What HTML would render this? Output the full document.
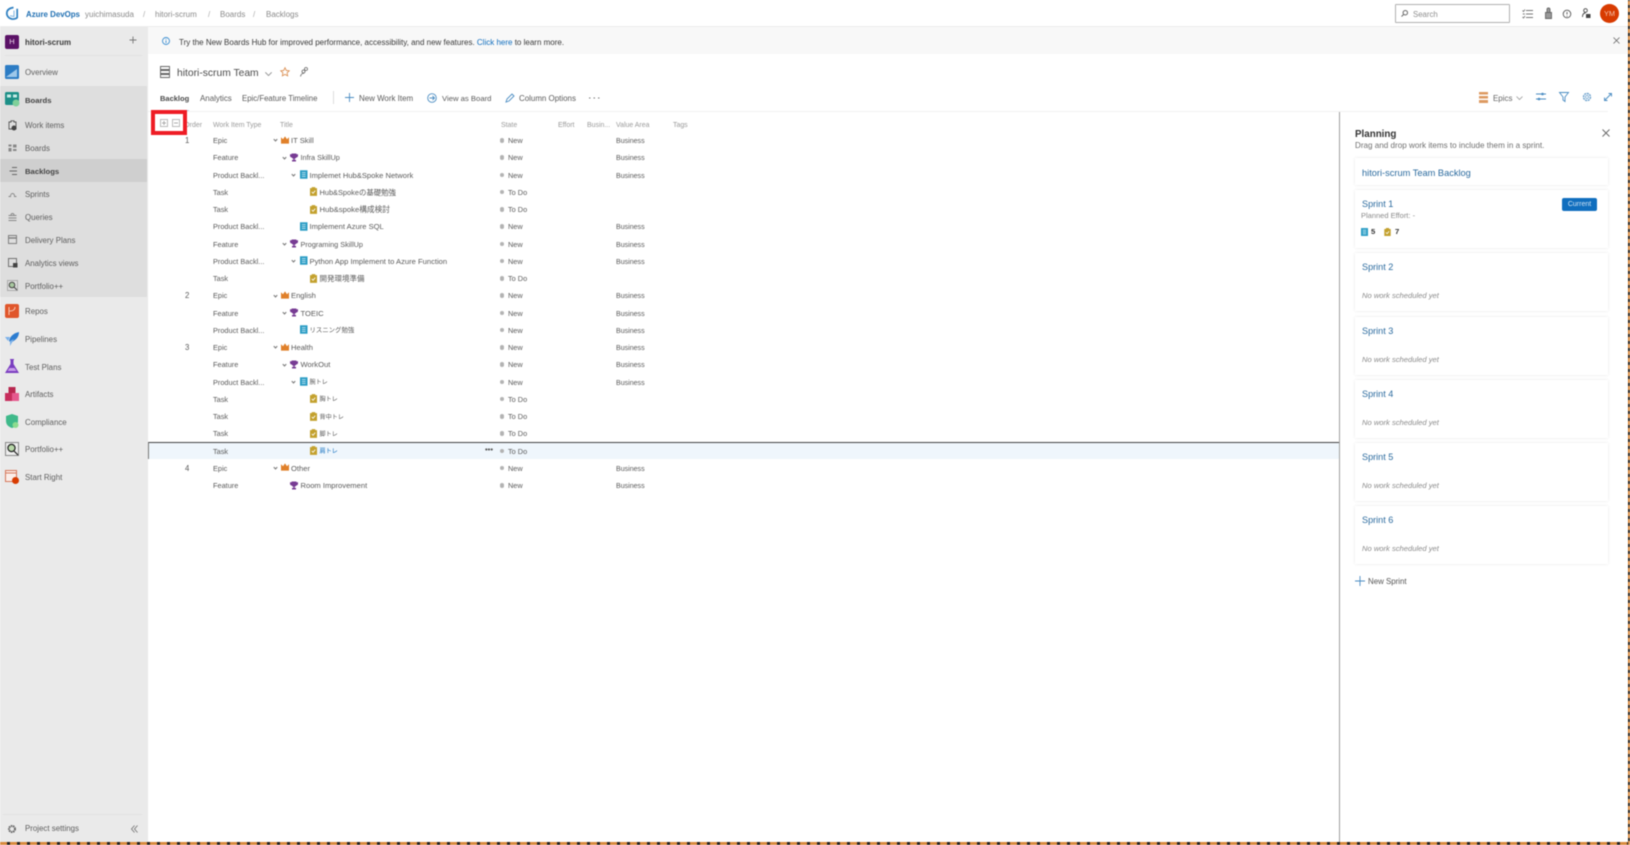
<!DOCTYPE html>
<html lang="en"><head><meta charset="utf-8"><title>Backlogs</title>
<style>
*{box-sizing:border-box}
html,body{margin:0;padding:0;width:1630px;height:845px;overflow:hidden;background:#fff}
body{font-family:"Liberation Sans","Noto Sans CJK JP",sans-serif;font-size:7.9px;color:#555;position:relative}
#wrap{position:absolute;inset:0;filter:blur(.4px)}
.a{position:absolute;white-space:nowrap;line-height:12px}
svg{position:absolute;overflow:visible}
.nav{position:absolute;left:25px;margin-top:1px;line-height:12px;white-space:nowrap;color:#5f5f5f;font-size:7.9px}
.r{position:absolute;left:148px;width:1191px;height:17px;font-size:7.6px}
.r span{position:absolute;top:3.5px;line-height:12px;white-space:nowrap;color:#5a5a5a}
.r svg{top:4px}
.r .o{left:37px;font-size:7.8px}
.r .t{left:65px;font-size:7.35px}
.r .s{left:360px;font-size:7.35px}
.r .v{left:468px;font-size:7.05px;top:4.5px}
.r i{position:absolute;left:351.500px;top:6.500px;width:4.500px;height:4.500px;border-radius:50%;background:#b3b3b3}
.r b{position:absolute;top:6.800px;width:3px;height:3px;border:solid #777;border-width:0 .8px .8px 0;transform:rotate(45deg)}
.l0{left:143px}.l1{left:152.500px}.l2{left:161.500px}.l3{left:171.500px}
.r svg.c{left:133px}.r svg.f{left:142px}.r svg.p{left:151.500px}.r svg.k{left:161.500px}
.ch{font-size:6.1px !important;top:4px !important}
.card{position:absolute;left:1355px;width:253px;background:#fff;box-shadow:0 0 3px rgba(0,0,0,.1)}
.st{position:absolute;left:7px;top:8px;font-size:9.100px;line-height:13px;color:#2a6a9e}
.nw{position:absolute;left:7px;top:37px;font-size:7.6px;line-height:12px;font-style:italic;color:#8a8a8a}
.h{position:absolute;top:120px;line-height:12px;color:#9a9a9a;font-size:6.95px;white-space:nowrap}
.tb{position:absolute;top:93px;line-height:12px;white-space:nowrap;color:#5a5a5a;font-size:7.95px}
</style></head><body>
<svg width="0" height="0" style="position:absolute"><defs>
<symbol id="crown" viewBox="0 0 10 9"><path d="M0 1l2.500 2.500L5 0l2.500 3.500L10 1v8H0z" fill="#e0802a"/></symbol>
<symbol id="trophy" viewBox="0 0 10 10"><path d="M2 0h6v1h2v2c0 1-1 2-2.200 2C7.300 6 6.500 6.400 5.800 6.500V8H7.500v2h-5V8h1.700V6.500C3.500 6.400 2.700 6 2.200 5 1 5 0 4 0 3V1h2z" fill="#773b93"/></symbol>
<symbol id="book" viewBox="0 0 8 9"><rect width="8" height="9" fill="#2a9cc4"/><path d="M2 2.500h4M2 4.500h4M2 6.500h4" stroke="#d5eef7" stroke-width=".8"/></symbol>
<symbol id="task" viewBox="0 0 8 10"><path d="M0 1.200h2V0h4v1.200h2V10H0z" fill="#c3a12e"/><path d="M2 5.500l1.500 1.500L6 4" stroke="#fff" stroke-width="1" fill="none"/></symbol>
</defs></svg>
<div id="wrap">
<!-- sidebar -->
<div style="position:absolute;left:0;top:27px;width:148px;height:815px;background:#eaeaea"></div>
<div style="position:absolute;left:0;top:86px;width:147px;height:211px;background:#dedede"></div>
<div style="position:absolute;left:0;top:159px;width:147px;height:23px;background:#cfcfcf"></div>
<div style="position:absolute;left:5px;top:55px;width:137px;height:1px;background:#e2e2e2"></div>
<div style="position:absolute;left:3px;top:814px;width:139px;height:1px;background:#e2e2e2"></div>

<!-- header -->
<svg style="left:5px;top:6px" width="14" height="15" viewBox="0 0 14 15"><path d="M8.500 1.500C5 2 2 3.500 1.800 7c-.1 3 2 5.500 5.200 6 2.300.3 4.700-.5 5.200-1.500V2.800" fill="none" stroke="#2d7fc1" stroke-width="1.700"/><path d="M9 4.500V10.500L5 9.800" fill="none" stroke="#7db5e0" stroke-width="1"/></svg>
<div class="a" style="left:26px;top:9px;color:#1f6fb2;font-weight:bold;font-size:7.900px">Azure DevOps</div>
<div class="a" style="left:85px;top:9px;color:#8a8a8a;font-size:8px">yuichimasuda</div>
<div class="a" style="left:143px;top:9px;color:#aaa">/</div>
<div class="a" style="left:155px;top:9px;color:#8a8a8a;font-size:8px">hitori-scrum</div>
<div class="a" style="left:208px;top:9px;color:#aaa">/</div>
<div class="a" style="left:220px;top:9px;color:#8a8a8a;font-size:8px">Boards</div>
<div class="a" style="left:253px;top:9px;color:#aaa">/</div>
<div class="a" style="left:266px;top:9px;color:#8a8a8a;font-size:8px">Backlogs</div>
<div style="position:absolute;left:1395px;top:4px;width:115px;height:19px;border:1px solid #b0b0b0;border-radius:1px;background:#fff"></div>
<svg style="left:1401px;top:10px" width="7" height="7" viewBox="0 0 7 7"><circle cx="4.300" cy="2.700" r="2.200" fill="none" stroke="#666"/><path d="M2.800 4.300L.5 6.500" stroke="#666"/></svg>
<div class="a" style="left:1413px;top:9px;color:#8e8e8e;font-size:7.800px">Search</div>
<svg style="left:1522px;top:9px" width="11" height="10" viewBox="0 0 11 10"><path d="M4 1.500h7M4 5h7M4 8.500h7M.5 1.500l1 1 1.500-2M.5 8l1 1 1.500-2M.8 5h2" stroke="#777" stroke-width=".9" fill="none"/></svg>
<svg style="left:1545px;top:8px" width="7" height="11" viewBox="0 0 7 11"><path d="M.5 4.500h6v6h-6zM2 4.500V1.500a1.500 1.500 0 0 1 3 0v3" fill="#999" stroke="#666" stroke-width=".9"/></svg>
<svg style="left:1562px;top:9px" width="10" height="10" viewBox="0 0 10 10"><circle cx="5" cy="5" r="3.800" fill="none" stroke="#555" stroke-width=".9"/><path d="M5 3v2.500M5 6.800v.8" stroke="#555" stroke-width=".9"/></svg>
<svg style="left:1582px;top:8px" width="9" height="11" viewBox="0 0 9 11"><circle cx="3.500" cy="2.500" r="1.800" fill="none" stroke="#444" stroke-width=".9"/><path d="M.5 9c0-3 1.500-4 3-4" stroke="#444" stroke-width=".9" fill="none"/><rect x="4" y="6" width="4.500" height="4" fill="#444"/></svg>
<div class="a" style="left:1600px;top:4px;width:19px;height:19px;border-radius:50%;background:#d83b01;color:#f4c4ad;font-size:7.400px;line-height:19px;text-align:center">YM</div>
<div style="position:absolute;left:0;top:26px;width:1628px;height:1px;background:#ececec"></div>

<!-- project -->
<div class="a" style="left:5px;top:35px;width:14px;height:14px;border-radius:2px;background:#5b1266;color:#ecd5ea;font-size:7.500px;line-height:14px;text-align:center">H</div>
<div class="nav" style="top:36px;color:#3c3c3c;font-weight:bold;font-size:7.900px">hitori-scrum</div>
<svg style="left:129px;top:36px" width="8" height="8"><path d="M4 .5v7M.5 4h7" stroke="#777" stroke-width=".9"/></svg>

<!-- nav icons -->
<svg style="left:5px;top:65px" width="14" height="14"><rect width="14" height="14" rx="1.500" fill="#2c7cc4"/><path d="M1 12L12 4v8z" fill="#9ec8ea"/></svg>
<div class="nav" style="top:66px">Overview</div>
<svg style="left:5px;top:92px" width="14" height="15"><rect width="14" height="13" rx="1.500" fill="#1c8f87"/><rect x="2" y="2.500" width="4" height="3" fill="#c7ebe6"/><rect x="8" y="2.500" width="4" height="3" fill="#c7ebe6"/><circle cx="11" cy="11" r="3.500" fill="#7fd09a"/></svg>
<div class="nav" style="top:94px;color:#444;font-weight:bold;font-size:7.700px">Boards</div>
<svg style="left:8px;top:120px" width="9" height="11"><path d="M1 2h2V.8h3V2h2v7H1z" fill="none" stroke="#555" stroke-width=".9"/><circle cx="6" cy="8" r="2.500" fill="#444"/></svg>
<div class="nav" style="top:119px">Work items</div>
<svg style="left:8px;top:144px" width="9" height="8"><path d="M.5.500h3v2h-3zM.5 4h3v3.500h-3zM5 .5h3.500v3H5zM5 5h3.500v2H5z" fill="#888"/></svg>
<div class="nav" style="top:142px">Boards</div>
<svg style="left:8px;top:167px" width="9" height="8"><path d="M4 .5h5M1.500 4h7.500M4 7.500h5" stroke="#666" stroke-width=".9"/></svg>
<div class="nav" style="top:165px;color:#444;font-weight:bold;font-size:7.700px">Backlogs</div>
<svg style="left:8px;top:190px" width="9" height="8"><path d="M.5 6.500h2c0-4 4-4 4 0h2" fill="none" stroke="#888" stroke-width=".9"/></svg>
<div class="nav" style="top:188px">Sprints</div>
<svg style="left:8px;top:212px" width="9" height="10"><path d="M.5 3.500h8M.5 6h8M.5 8.500h8M3 3a1.500 1.500 0 0 1 3 0" fill="none" stroke="#888" stroke-width=".9"/></svg>
<div class="nav" style="top:211px">Queries</div>
<svg style="left:8px;top:235px" width="9" height="9"><rect x=".5" y=".5" width="8" height="8" fill="none" stroke="#777" stroke-width=".9"/><path d="M.5 3h8" stroke="#777" stroke-width="1.300"/></svg>
<div class="nav" style="top:234px">Delivery Plans</div>
<svg style="left:8px;top:258px" width="10" height="10"><rect x=".5" y=".5" width="8" height="8" fill="none" stroke="#666" stroke-width=".9"/><rect x="5" y="5" width="4.500" height="4.500" fill="#444"/></svg>
<div class="nav" style="top:257px">Analytics views</div>
<svg style="left:7px;top:280px" width="11" height="11"><rect x=".5" y=".5" width="10" height="10" fill="none" stroke="#aaa"/><circle cx="5" cy="5" r="2.800" fill="#a9c9a0" stroke="#444"/><path d="M7 7l3 3" stroke="#444"/></svg>
<div class="nav" style="top:280px">Portfolio++</div>
<svg style="left:5px;top:304px" width="14" height="14"><rect width="14" height="14" rx="2" fill="#e0562b"/><path d="M4 3v8M4 7c4 0 6-1 6-4" stroke="#f8c9b5" fill="none"/></svg>
<div class="nav" style="top:305px">Repos</div>
<svg style="left:5px;top:332px" width="15" height="14"><path d="M4 9C5 4 9 1 14 0c0 5-3 8-8 10.500z" fill="#2c7cd0"/><path d="M0 5h5L3 9zM5 14V9l4-2z" fill="#7bb1ea"/></svg>
<div class="nav" style="top:333px">Pipelines</div>
<svg style="left:5px;top:359px" width="14" height="15"><path d="M5 0h4v1H8.500v4L14 14H0L5.500 5V1H5z" fill="#7a3dc0"/><path d="M2.500 12l2-3h5l2 3z" fill="#c79be8"/></svg>
<div class="nav" style="top:361px">Test Plans</div>
<svg style="left:5px;top:387px" width="14" height="14"><path d="M3.500 0h7v6h-7z" fill="#b8274f"/><path d="M0 6h7v8H0z" fill="#c72d5c"/><path d="M7 6h7v8H7z" fill="#e65a8e"/></svg>
<div class="nav" style="top:388px">Artifacts</div>
<svg style="left:5px;top:414px" width="14" height="15"><path d="M7 0l6 2v5c0 4-3 6-6 7-3-1-6-3-6-7V2z" fill="#3fb98a"/><circle cx="10.500" cy="11" r="3" fill="#8ddc8f"/></svg>
<div class="nav" style="top:416px">Compliance</div>
<svg style="left:5px;top:442px" width="14" height="14"><rect x=".5" y=".5" width="13" height="13" fill="#eee" stroke="#888"/><circle cx="6.500" cy="6" r="3.600" fill="#b8d8a8" stroke="#222" stroke-width="1.200"/><path d="M9 9l4 4" stroke="#222" stroke-width="1.200"/></svg>
<div class="nav" style="top:443px">Portfolio++</div>
<svg style="left:5px;top:470px" width="14" height="14"><rect x=".5" y=".5" width="11" height="11" fill="#fbeee9" stroke="#d5775a"/><path d="M.5 3h11" stroke="#d5775a"/><circle cx="10.500" cy="10.500" r="3.500" fill="#d83b01"/></svg>
<div class="nav" style="top:471px">Start Right</div>
<svg style="left:7px;top:824px" width="10" height="10"><circle cx="5" cy="5" r="3" fill="none" stroke="#666" stroke-width="2" stroke-dasharray="1.500 .6"/></svg>
<div class="nav" style="top:822px">Project settings</div>
<svg style="left:131px;top:825px" width="7" height="8"><path d="M3.500 .5L.5 4l3 3.500M6.500 .5L3.500 4l3 3.500" fill="none" stroke="#777" stroke-width=".9"/></svg>

<!-- banner -->
<div style="position:absolute;left:148px;top:27px;width:1480px;height:27px;background:#f8f8f8"></div>
<svg style="left:162px;top:37px" width="8" height="8"><circle cx="4" cy="4" r="3.500" fill="none" stroke="#3d8fd1" stroke-width=".9"/><path d="M4 3.500v2.500M4 2v.8" stroke="#3d8fd1" stroke-width=".9"/></svg>
<div class="a" style="left:179px;top:37px;color:#3a3a3a;font-size:8px">Try the New Boards Hub for improved performance, accessibility, and new features. <span style="color:#106ebe">Click here</span> to learn more.</div>
<svg style="left:1613px;top:37px" width="7" height="7"><path d="M.5.500l6 6M6.500.500l-6 6" stroke="#666" stroke-width=".8"/></svg>

<!-- team header -->
<svg style="left:160px;top:66px" width="10" height="12"><path d="M.5.500h9v3h-9zM.5 4.500h9v3h-9zM.5 8.500h9v3h-9z" fill="#fff" stroke="#666" stroke-width=".9"/></svg>
<div class="a" style="left:177px;top:66.500px;color:#4a4a4a;font-size:10.300px;line-height:14px">hitori-scrum Team</div>
<svg style="left:264.500px;top:71.500px" width="7" height="4"><path d="M.3.300L3.500 3.500 6.700.3" fill="none" stroke="#888" stroke-width=".8"/></svg>
<svg style="left:280px;top:67px" width="10" height="10" viewBox="0 0 11 11"><path d="M5.500.8l1.400 3 3.300.4-2.400 2.200.6 3.300-2.900-1.600-2.900 1.600.6-3.300L.8 4.200l3.300-.4z" fill="none" stroke="#d98a4a" stroke-width=".9"/></svg>
<svg style="left:300px;top:67px" width="9" height="10"><circle cx="6" cy="2" r="1.500" fill="none" stroke="#666" stroke-width=".8"/><circle cx="3.500" cy="4.500" r="1.500" fill="none" stroke="#666" stroke-width=".8"/><path d="M.5 9.500C1 7 2.500 6 4 6.500" fill="none" stroke="#666" stroke-width=".8"/></svg>

<!-- toolbar -->
<div class="tb" style="left:160px;font-weight:bold;color:#4b4b4b;font-size:7.500px">Backlog</div>
<div style="position:absolute;left:160px;top:110px;width:29px;height:1.500px;background:#b8d5ec"></div>
<div class="tb" style="left:200px">Analytics</div>
<div class="tb" style="left:242px;font-size:7.800px">Epic/Feature Timeline</div>
<div style="position:absolute;left:333px;top:91px;width:1px;height:13px;background:#ddd"></div>
<svg style="left:345px;top:93px" width="9" height="9"><path d="M4.500 0v9M0 4.500h9" stroke="#4a8cc2" stroke-width=".9"/></svg>
<div class="tb" style="left:359px">New Work Item</div>
<svg style="left:427px;top:93px" width="10" height="10"><circle cx="5" cy="5" r="4.300" fill="none" stroke="#4a8cc2" stroke-width=".9"/><path d="M2.500 5h5M5.500 3l2 2-2 2" fill="none" stroke="#4a8cc2" stroke-width=".9"/></svg>
<div class="tb" style="left:442px;font-size:7.700px">View as Board</div>
<svg style="left:505px;top:93px" width="10" height="10"><path d="M1 9l1-3 5-5 2 2-5 5zM7 1" fill="none" stroke="#4a8cc2" stroke-width=".9"/></svg>
<div class="tb" style="left:519px">Column Options</div>
<svg style="left:589px;top:97px" width="11" height="2"><path d="M0 1h1.500M4.500 1H6M9 1h1.500" stroke="#777"/></svg>
<svg style="left:1479px;top:92px" width="9" height="11"><path d="M0 0h9v2.500H0zM0 4h9v2.500H0zM0 8h9v3H0z" fill="#dd9a62"/></svg>
<div class="tb" style="left:1493px;color:#666">Epics</div>
<svg style="left:1516px;top:96px" width="7" height="4"><path d="M.5.500L3.500 3.500 6.500.500" fill="none" stroke="#999" stroke-width=".8"/></svg>
<svg style="left:1536px;top:92px" width="10" height="10"><path d="M0 2h10M0 7h10" stroke="#4a8cc2" stroke-width=".9"/><circle cx="6.500" cy="2" r="1.300" fill="#4a8cc2"/><circle cx="3" cy="7" r="1.300" fill="#4a8cc2"/></svg>
<svg style="left:1559px;top:92px" width="10" height="10"><path d="M.5.500h9L6 5v4.500L4 8V5z" fill="none" stroke="#4a8cc2" stroke-width=".9"/></svg>
<svg style="left:1582px;top:92px" width="10" height="10"><circle cx="5" cy="5" r="3.500" fill="none" stroke="#6aa0cc" stroke-width="1.400" stroke-dasharray="2 .7"/><circle cx="5" cy="5" r="1.500" fill="none" stroke="#6aa0cc" stroke-width=".7"/></svg>
<svg style="left:1604px;top:93px" width="8" height="8"><path d="M.5 7.500l7-7M4.500.5h3v3M.5 4.500v3h3" fill="none" stroke="#4a8cc2" stroke-width=".9"/></svg>
<div style="position:absolute;left:148px;top:111px;width:1460px;height:1px;background:#f1f1f1"></div>

<!-- red highlight -->
<div style="position:absolute;left:151px;top:110px;width:36px;height:25px;border:4.500px solid #ee1c25"></div>
<svg style="left:160px;top:119px" width="21" height="9"><rect x=".5" y=".5" width="7" height="7" fill="#fff" stroke="#bbb"/><path d="M4 2v4M2 4h4" stroke="#aaa"/><rect x="12.500" y=".5" width="7" height="7" fill="#fff" stroke="#bbb"/><path d="M14 4h4" stroke="#aaa"/></svg>

<!-- grid head -->
<div class="h" style="left:187px;width:15px;overflow:hidden;direction:rtl">Order</div>
<div class="h" style="left:213px">Work Item Type</div>
<div class="h" style="left:280px">Title</div>
<div class="h" style="left:501px">State</div>
<div class="h" style="left:558px">Effort</div>
<div class="h" style="left:587px">Busin...</div>
<div class="h" style="left:616px">Value Area</div>
<div class="h" style="left:673px">Tags</div>

<!-- rows -->
<div class="r" style="top:131.5px"><span class="o">1</span><span class="t">Epic</span><b style="left:126px"></b><svg class="c" width="8" height="8"><use href="#crown"/></svg><span class="l0">IT Skill</span><i></i><span class="s">New</span><span class="v">Business</span></div>
<div class="r" style="top:148.75px"><span class="t">Feature</span><b style="left:135px"></b><svg class="f" width="8" height="9"><use href="#trophy"/></svg><span class="l1" style="font-size:7.300px">Infra SkillUp</span><i></i><span class="s">New</span><span class="v">Business</span></div>
<div class="r" style="top:166px"><span class="t">Product Backl...</span><b style="left:144px"></b><svg class="p" width="7.500" height="9"><use href="#book"/></svg><span class="l2">Implemet Hub&amp;Spoke Network</span><i></i><span class="s">New</span><span class="v">Business</span></div>
<div class="r" style="top:183.25px"><span class="t">Task</span><svg class="k" width="7" height="9"><use href="#task"/></svg><span class="l3" style="font-size:7.400px">Hub&amp;Spokeの基礎勉強</span><i></i><span class="s">To Do</span></div>
<div class="r" style="top:200.5px"><span class="t">Task</span><svg class="k" width="7" height="9"><use href="#task"/></svg><span class="l3" style="font-size:7.700px">Hub&amp;spoke構成検討</span><i></i><span class="s">To Do</span></div>
<div class="r" style="top:217.75px"><span class="t">Product Backl...</span><svg class="p" width="7.500" height="9"><use href="#book"/></svg><span class="l2">Implement Azure SQL</span><i></i><span class="s">New</span><span class="v">Business</span></div>
<div class="r" style="top:235px"><span class="t">Feature</span><b style="left:135px"></b><svg class="f" width="8" height="9"><use href="#trophy"/></svg><span class="l1" style="font-size:7.300px">Programing SkillUp</span><i></i><span class="s">New</span><span class="v">Business</span></div>
<div class="r" style="top:252.25px"><span class="t">Product Backl...</span><b style="left:144px"></b><svg class="p" width="7.500" height="9"><use href="#book"/></svg><span class="l2">Python App Implement to Azure Function</span><i></i><span class="s">New</span><span class="v">Business</span></div>
<div class="r" style="top:269.5px"><span class="t">Task</span><svg class="k" width="7" height="9"><use href="#task"/></svg><span class="l3" style="font-size:7.500px">開発環境準備</span><i></i><span class="s">To Do</span></div>
<div class="r" style="top:286.75px"><span class="o">2</span><span class="t">Epic</span><b style="left:126px"></b><svg class="c" width="8" height="8"><use href="#crown"/></svg><span class="l0">English</span><i></i><span class="s">New</span><span class="v">Business</span></div>
<div class="r" style="top:304px"><span class="t">Feature</span><b style="left:135px"></b><svg class="f" width="8" height="9"><use href="#trophy"/></svg><span class="l1">TOEIC</span><i></i><span class="s">New</span><span class="v">Business</span></div>
<div class="r" style="top:321.25px"><span class="t">Product Backl...</span><svg class="p" width="7.500" height="9"><use href="#book"/></svg><span class="l2" style="font-size:6.400px;top:4px">リスニング勉強</span><i></i><span class="s">New</span><span class="v">Business</span></div>
<div class="r" style="top:338.5px"><span class="o">3</span><span class="t">Epic</span><b style="left:126px"></b><svg class="c" width="8" height="8"><use href="#crown"/></svg><span class="l0">Health</span><i></i><span class="s">New</span><span class="v">Business</span></div>
<div class="r" style="top:355.75px"><span class="t">Feature</span><b style="left:135px"></b><svg class="f" width="8" height="9"><use href="#trophy"/></svg><span class="l1">WorkOut</span><i></i><span class="s">New</span><span class="v">Business</span></div>
<div class="r" style="top:373px"><span class="t">Product Backl...</span><b style="left:144px"></b><svg class="p" width="7.500" height="9"><use href="#book"/></svg><span class="l2 ch">腕トレ</span><i></i><span class="s">New</span><span class="v">Business</span></div>
<div class="r" style="top:390.25px"><span class="t">Task</span><svg class="k" width="7" height="9"><use href="#task"/></svg><span class="l3 ch">胸トレ</span><i></i><span class="s">To Do</span></div>
<div class="r" style="top:407.5px"><span class="t">Task</span><svg class="k" width="7" height="9"><use href="#task"/></svg><span class="l3 ch">背中トレ</span><i></i><span class="s">To Do</span></div>
<div class="r" style="top:424.75px"><span class="t">Task</span><svg class="k" width="7" height="9"><use href="#task"/></svg><span class="l3 ch">脚トレ</span><i></i><span class="s">To Do</span></div>
<div style="position:absolute;left:148px;top:442px;width:1191px;height:17px;background:#eff6fc;border-top:1px solid #444;border-left:1px solid #777"></div>
<div class="r" style="top:442px"><span class="t">Task</span><svg class="k" width="7" height="9"><use href="#task"/></svg><span class="l3 ch" style="color:#106ebe">肩トレ</span><span style="left:337px;top:2px;font-weight:bold;color:#555">•••</span><i></i><span class="s">To Do</span></div>
<div class="r" style="top:459.25px"><span class="o">4</span><span class="t">Epic</span><b style="left:126px"></b><svg class="c" width="8" height="8"><use href="#crown"/></svg><span class="l0">Other</span><i></i><span class="s">New</span><span class="v">Business</span></div>
<div class="r" style="top:476.5px"><span class="t">Feature</span><svg class="f" width="8" height="9"><use href="#trophy"/></svg><span class="l1">Room Improvement</span><i></i><span class="s">New</span><span class="v">Business</span></div>

<!-- planning panel -->
<div style="position:absolute;left:1339px;top:112px;width:1px;height:730px;background:#a0a0a0"></div>
<div class="a" style="left:1355px;top:128px;color:#333;font-size:9.800px;font-weight:bold;line-height:13px">Planning</div>
<div class="a" style="left:1355px;top:140px;color:#707070;font-size:8.100px">Drag and drop work items to include them in a sprint.</div>
<svg style="left:1602px;top:129px" width="8" height="8"><path d="M.5.500l7 7M7.500.500l-7 7" stroke="#666" stroke-width=".9"/></svg>
<div class="card" style="top:158px;height:27px"><div class="a" style="left:7px;top:7.500px;color:#2a6a9e;font-size:9.250px;line-height:14px">hitori-scrum Team Backlog</div></div>
<div class="card" style="top:190px;height:58px">
<div class="st">Sprint 1</div>
<div class="a" style="left:6px;top:20px;color:#8a8a8a;font-size:7.500px">Planned Effort: -</div>
<svg style="left:6px;top:38px" width="7" height="8"><use href="#book"/></svg><div class="a" style="left:16px;top:36px;color:#333;font-weight:bold;font-size:7.700px">5</div>
<svg style="left:29px;top:38px" width="7" height="8"><use href="#task"/></svg><div class="a" style="left:40px;top:36px;color:#333;font-weight:bold;font-size:7.700px">7</div>
<div class="a" style="left:207px;top:8px;width:35px;height:13px;background:#106ebe;border-radius:2px;color:#cfe3f5;font-size:7px;line-height:13px;text-align:center">Current</div>
</div>
<div class="card" style="top:253px;height:58px"><div class="st">Sprint 2</div><div class="nw">No work scheduled yet</div></div>
<div class="card" style="top:317px;height:58px"><div class="st">Sprint 3</div><div class="nw">No work scheduled yet</div></div>
<div class="card" style="top:380px;height:58px"><div class="st">Sprint 4</div><div class="nw">No work scheduled yet</div></div>
<div class="card" style="top:443px;height:58px"><div class="st">Sprint 5</div><div class="nw">No work scheduled yet</div></div>
<div class="card" style="top:506px;height:58px"><div class="st">Sprint 6</div><div class="nw">No work scheduled yet</div></div>
<svg style="left:1355px;top:576px" width="10" height="10"><path d="M5 0v10M0 5h10" stroke="#4a8cc2" stroke-width=".9"/></svg>
<div class="a" style="left:1368px;top:576px;color:#555;font-size:7.900px">New Sprint</div>

<!-- capture border -->
<div style="position:absolute;left:0;top:842px;width:1630px;height:3px;background:repeating-linear-gradient(90deg,#d98a3d 0 7px,#222 7px 10px)"></div>
<div style="position:absolute;left:1628px;top:0;width:2px;height:845px;background:repeating-linear-gradient(0deg,#d98a3d 0 4px,#222 4px 7px)"></div>
</div>
</body></html>
